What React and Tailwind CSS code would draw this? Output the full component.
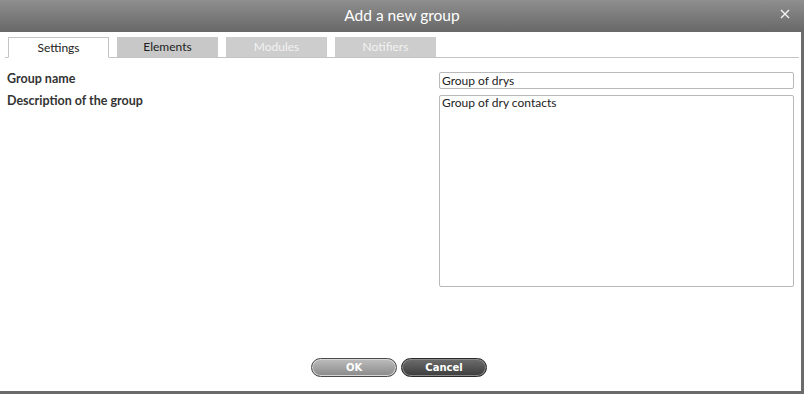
import React from 'react';

const tabs = [
  { label: 'Settings', active: true },
  { label: 'Elements' },
  { label: 'Modules', disabled: true },
  { label: 'Notifiers', disabled: true },
];

const Tab = ({ label, active, disabled }) => (
  <div
    className={`w-[101px] h-[20px] flex items-center justify-center text-[12px] ${
      active
        ? 'bg-white border border-[#c4c4c4] border-b-white h-[21px] -mb-px text-[#222]'
        : disabled
        ? 'bg-[#cdcdcd] text-[#f2f2f2]'
        : 'bg-[#c8c8c8] text-[#222]'
    }`}
  >
    {label}
  </div>
);

export default function App() {
  return (
    <div
      className="w-[804px] h-[394px] bg-white flex flex-col overflow-hidden"
      style={{ fontFamily: 'Lato, "Open Sans", sans-serif' }}
    >
      <div className="h-[32px] shrink-0 bg-gradient-to-b from-[#8f8f8f] to-[#686868] flex items-center relative">
        <div className="flex-1 text-center text-white text-[15.5px]">Add a new group</div>
        <svg className="absolute right-[14px] top-[9px]" width="10" height="10" viewBox="0 0 10 10">
          <path d="M1 1 L9 9 M9 1 L1 9" stroke="#f4f4f4" strokeWidth="1.4" fill="none" />
        </svg>
      </div>

      <div className="flex-1 flex border-r-[3px] border-b-[3px] border-[#6b6b6b] min-h-0">
        <div className="flex-1 flex flex-col">
          <div className="mt-[6px] ml-[5px] mr-[2px] flex items-end gap-[8px] pl-[3px] border-b border-[#c4c4c4] h-[20px]">
            {tabs.map((t) => (
              <Tab key={t.label} {...t} />
            ))}
          </div>

          <div className="flex px-[7px] mt-[14px]">
            <div className="flex-1 flex flex-col text-[12.5px] font-bold text-[#333]">
              <div className="h-[15px] flex items-center">Group name</div>
              <div className="h-[15px] flex items-center mt-[7px]">Description of the group</div>
            </div>
            <div className="w-[355px] flex flex-col gap-[6px]">
              <div className="h-[17px] border border-[#b9b9b9] rounded-[2px] px-[2px] text-[12px] text-[#222] flex items-center">
                Group of drys
              </div>
              <div className="h-[192px] border border-[#b9b9b9] rounded-[2px] px-[2px] text-[12px] text-[#222] leading-[14px]">
                Group of dry contacts
              </div>
            </div>
          </div>

          <div className="flex-1" />

          <div className="flex justify-center gap-[4px] mb-[14px] ml-[-3px]">
            <button
              className="w-[86px] h-[19px] rounded-full border border-[#4a4a4a] bg-gradient-to-b from-[#bdbdbd] to-[#8a8a8a] text-white text-[10px] font-bold shadow-[inset_0_0_0_1px_#d6d6d6]"
              style={{ fontFamily: '"DejaVu Sans", sans-serif' }}
            >
              OK
            </button>
            <button
              className="w-[86px] h-[19px] rounded-full border border-[#2a2a2a] bg-gradient-to-b from-[#6e6e6e] to-[#3c3c3c] text-white text-[10px] font-bold shadow-[inset_0_0_0_1px_#8a8a8a]"
              style={{ fontFamily: '"DejaVu Sans", sans-serif' }}
            >
              Cancel
            </button>
          </div>
        </div>
      </div>
    </div>
  );
}
